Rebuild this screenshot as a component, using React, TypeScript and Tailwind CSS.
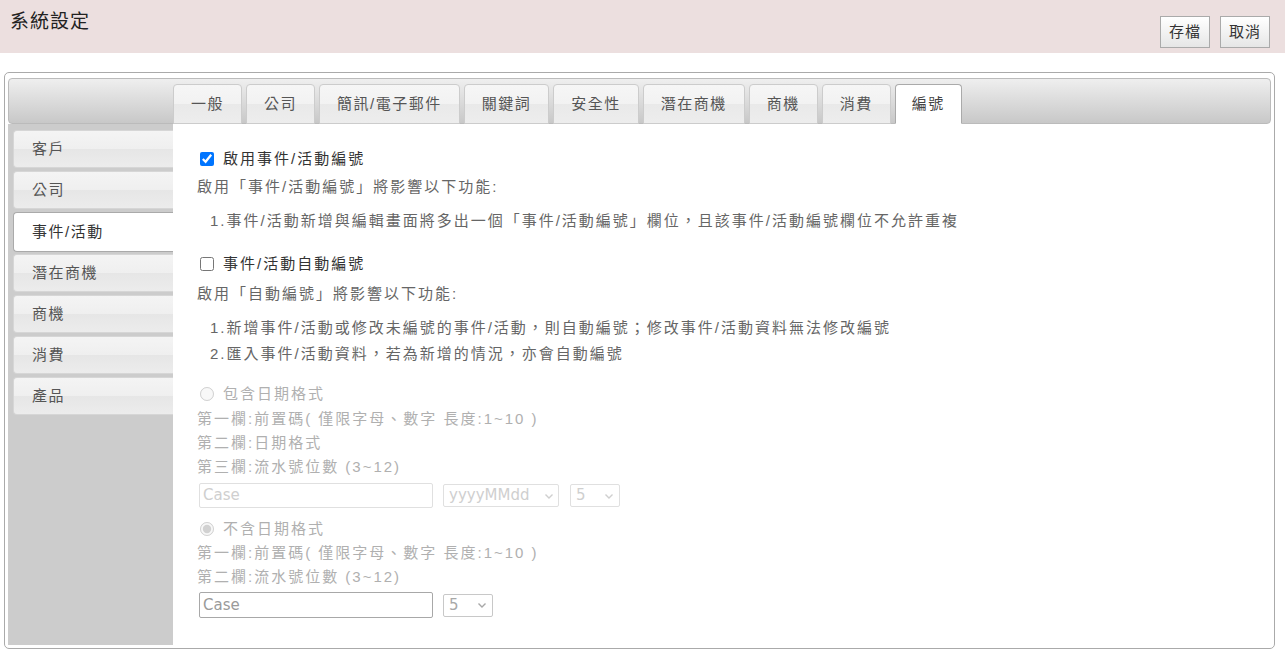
import React from "react";

const tabs = ["一般", "公司", "簡訊/電子郵件", "關鍵詞", "安全性", "潛在商機", "商機", "消費", "編號"];
const sideItems = ["客戶", "公司", "事件/活動", "潛在商機", "商機", "消費", "產品"];

const font = { fontFamily: '"Liberation Sans", "Noto Sans CJK TC", sans-serif' };

function Chevron() {
  return (
    <svg width="12" height="12" viewBox="0 0 12 12" className="ml-auto">
      <path d="M2.5 4.5 L6 8 L9.5 4.5" stroke="currentColor" strokeWidth="1.4" fill="none" />
    </svg>
  );
}

export default function App() {
  return (
    <div className="w-[1285px] h-[656px] bg-white text-[#333] overflow-hidden" style={font}>
      {/* page header */}
      <div className="h-[53px] bg-[#ecdfdf] flex justify-between">
        <div className="pl-[10px] pt-[9px] text-[19px] leading-[26px] tracking-[1px] text-[#222]">系統設定</div>
        <div className="flex gap-[10px] pt-[16px] pr-[15px]">
          {["存檔", "取消"].map((b) => (
            <button
              key={b}
              className="w-[50px] h-[32px] border border-[#aaa] bg-gradient-to-b from-white to-[#e6e6e6] text-[15px] text-[#333] tracking-[1px]"
            >
              {b}
            </button>
          ))}
        </div>
      </div>

      {/* settings frame */}
      <div className="mt-[19px] ml-[4px] w-[1271px] h-[577px] border border-[#aaa] rounded-[5px] px-[3px] pt-[5px] pb-[3px]">
        <div className="h-full flex flex-col">
          {/* tab strip */}
          <div className="h-[46px] shrink-0 border border-[#bbb] rounded-[4px] bg-gradient-to-b from-[#efefef] to-[#c8c8c8] flex items-end pl-[164px] gap-[4px]">
            {tabs.map((t) => {
              const on = t === "編號";
              return (
                <div
                  key={t}
                  className={
                    "h-[40px] -mb-px flex items-center rounded-t-[4px] border text-[15px] tracking-[1.5px] " +
                    (on
                      ? "bg-white border-[#aaa] border-b-white text-[#444] px-[16px]"
                      : "px-[17px] border-[#ccc] text-[#555] bg-[linear-gradient(#f6f6f6_0%,#f2f2f2_50%,#e9e9e9_50%,#ededed_100%)]")
                  }
                >
                  {t}
                </div>
              );
            })}
          </div>

          <div className="flex flex-1 min-h-0">
            {/* side menu */}
            <div className="w-[165px] bg-[#cccccc] pt-[6px] pl-[5px]">
              {sideItems.map((s) => {
                const on = s === "事件/活動";
                return (
                  <div
                    key={s}
                    className={
                      "w-[160px] flex items-center pl-[18px] rounded-l-[4px] border border-r-0 text-[15px] tracking-[1.5px] " +
                      (on
                        ? "h-[40px] mb-[2px] bg-white border-[#aaa] text-[#333]"
                        : "h-[38px] mb-[3px] border-[#d6d6d6] text-[#555] bg-[linear-gradient(#f4f4f4_0%,#efefef_50%,#e6e6e6_50%,#ececec_100%)]")
                    }
                  >
                    {s}
                  </div>
                );
              })}
            </div>

            {/* content */}
            <div className="flex-1 bg-white pl-[24px] pt-[22px] text-[15px] tracking-[2px]">
              <label className="flex items-center h-[26px] text-[#333]">
                <input type="checkbox" defaultChecked className="w-[14px] h-[14px] m-0 ml-[3px] mr-[9px]" />
                啟用事件/活動編號
              </label>
              <div className="h-[29px] leading-[29px] text-[#666]">啟用「事件/活動編號」將影響以下功能:</div>
              <div className="mt-[7px] pl-[13px] leading-[26px] text-[#666]">
                <div>1.事件/活動新增與編輯畫面將多出一個「事件/活動編號」欄位，且該事件/活動編號欄位不允許重複</div>
              </div>

              <label className="mt-[17px] flex items-center h-[26px] text-[#333]">
                <input type="checkbox" className="w-[14px] h-[14px] m-0 ml-[3px] mr-[9px]" />
                事件/活動自動編號
              </label>
              <div className="mt-[2px] h-[30px] leading-[30px] text-[#666]">啟用「自動編號」將影響以下功能:</div>
              <div className="mt-[6px] pl-[13px] leading-[26px] text-[#666]">
                <div>1.新增事件/活動或修改未編號的事件/活動，則自動編號；修改事件/活動資料無法修改編號</div>
                <div>2.匯入事件/活動資料，若為新增的情況，亦會自動編號</div>
              </div>

              {/* with date */}
              <div className="mt-[14px] text-[#b0b0b0] leading-[24px]">
                <label className="flex items-center h-[26px]">
                  <input type="radio" name="fmt" disabled className="w-[14px] h-[14px] m-0 ml-[3px] mr-[9px]" />
                  包含日期格式
                </label>
                <div>第一欄:前置碼( 僅限字母、數字 長度:1~10 )</div>
                <div>第二欄:日期格式</div>
                <div>第三欄:流水號位數 (3~12)</div>
              </div>
              <div className="mt-[4px] ml-[2px] flex gap-[10px] items-center tracking-normal" style={{ fontFamily: '"DejaVu Sans", sans-serif' }}>
                <div className="w-[234px] h-[25px] border border-[#e0e0e0] rounded-[2px] pl-[3px] text-[15px] leading-[23px] text-[#cfcfcf]">Case</div>
                <div className="w-[116px] h-[23px] border border-[#e0e0e0] rounded-[2px] pl-[5px] pr-[3px] text-[15px] leading-[21px] text-[#cfcfcf] flex items-center">
                  yyyyMMdd
                  <Chevron />
                </div>
                <div className="ml-[1px] w-[50px] h-[23px] border border-[#e0e0e0] rounded-[2px] pl-[5px] pr-[4px] text-[15px] text-[#cfcfcf] flex items-center">
                  5
                  <Chevron />
                </div>
              </div>

              {/* without date */}
              <div className="mt-[9px] text-[#b0b0b0] leading-[24px]">
                <label className="flex items-center h-[24px]">
                  <input type="radio" name="fmt" disabled defaultChecked className="w-[14px] h-[14px] m-0 ml-[3px] mr-[9px]" />
                  不含日期格式
                </label>
                <div>第一欄:前置碼( 僅限字母、數字 長度:1~10 )</div>
                <div>第二欄:流水號位數 (3~12)</div>
              </div>
              <div className="mt-[3px] ml-[2px] flex gap-[10px] items-center tracking-normal" style={{ fontFamily: '"DejaVu Sans", sans-serif' }}>
                <div className="w-[234px] h-[26px] border border-[#a8a8a8] rounded-[2px] pl-[3px] text-[15px] leading-[24px] text-[#9a9a9a]">Case</div>
                <div className="w-[50px] h-[23px] border border-[#c8c8c8] rounded-[2px] pl-[5px] pr-[4px] text-[15px] text-[#a8a8a8] flex items-center">
                  5
                  <Chevron />
                </div>
              </div>
            </div>
          </div>
        </div>
      </div>
    </div>
  );
}
